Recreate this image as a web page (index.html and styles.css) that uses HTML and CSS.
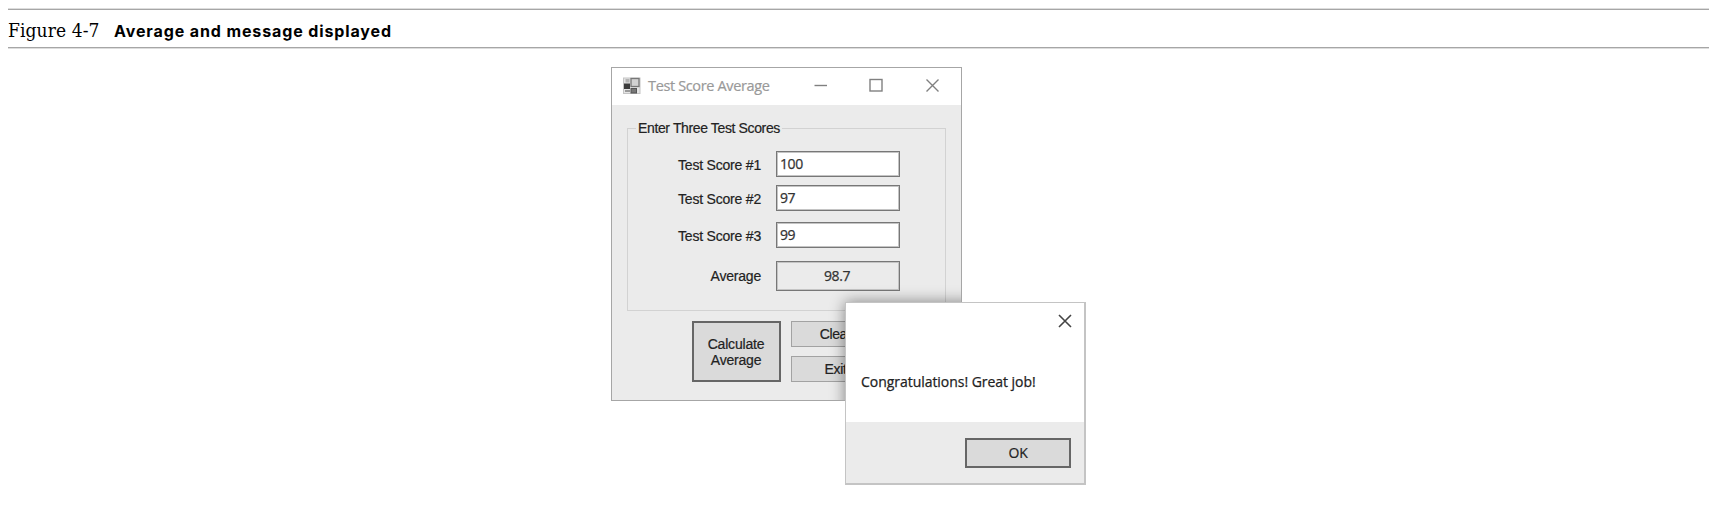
FILE: index.html
```
<!DOCTYPE html>
<html lang="en">
<head>
<meta charset="utf-8">
<title>Figure 4-7</title>
<link rel="stylesheet" href="styles.css">
</head>
<body>
<figure class="figure">
  <figcaption class="caption"><span class="caption-number">Figure 4-7</span><span class="caption-title">Average and message displayed</span></figcaption>
  <div class="stage">
    <section class="window">
      <header class="titlebar">
        <svg class="app-icon" width="18" height="18" viewBox="0 0 18 18">
          <rect x=".5" y="1" width="16.5" height="15.5" fill="#e4e4e4" stroke="#c4c4c4"/>
          <rect x="1" y="6.5" width="6" height="5.5" fill="#3c3c3c"/>
          <rect x="2.5" y="2" width="4" height="3.5" fill="#b4b4b4"/>
          <rect x="8" y="1.5" width="8" height="8" fill="#d2d2d2" stroke="#777" stroke-width="1.3"/>
          <rect x="8" y="11.5" width="5.5" height="4.5" fill="#777" stroke="#555"/>
          <path d="M2 14h5" stroke="#999" stroke-width="2"/>
        </svg>
        <span class="title">Test Score Average</span>
        <svg class="controls" width="128" height="16" viewBox="0 0 128 16" fill="none" stroke="#808080" stroke-width="1.4">
          <path d="M1.5 8.5H14"/>
          <rect x="57" y="2.5" width="12" height="11.5"/>
          <path d="M113.5 2.5l12 12m0-12l-12 12"/>
        </svg>
      </header>
      <div class="client">
        <fieldset class="group">
          <legend class="legend">Enter Three Test Scores</legend>
          <div class="fields">
            <span class="label">Test Score #1</span><span class="box">100</span>
            <span class="label">Test Score #2</span><span class="box">97</span>
            <span class="label">Test Score #3</span><span class="box">99</span>
            <span class="label label-average">Average</span><span class="box box-result">98.7</span>
          </div>
        </fieldset>
        <div class="actions">
          <button class="btn btn-main">Calculate<br>Average</button>
          <div class="stack">
            <button class="btn">Clear</button>
            <button class="btn">Exit</button>
          </div>
        </div>
      </div>
    </section>
    <section class="dialog">
      <div class="dialog-body">
        <svg class="dialog-close" width="14" height="14" viewBox="0 0 14 14" stroke="#444" stroke-width="1.6"><path d="M1 1l12 12M13 1L1 13"/></svg>
        <span class="message">Congratulations! Great job!</span>
      </div>
      <footer class="dialog-footer"><button class="btn btn-ok">OK</button></footer>
    </section>
  </div>
</figure>
</body>
</html>
```
FILE: styles.css
```
* { box-sizing: border-box; }
body { margin: 0; background: #fff; font-family: "Liberation Sans", Arial, sans-serif; }
.figure { margin: 0; padding: 8px 14px 0 8px; }
.caption {
  display: flex;
  align-items: baseline;
  height: 41px;
  padding-top: 8px;
  border-top: 1px solid #ddd;
  border-bottom: 1px solid #ddd;
  box-shadow: inset 0 1px #a6a6a6, inset 0 -1px #a6a6a6;
  color: #000;
  line-height: 26px;
  white-space: nowrap;
}
.caption-number { width: 106px; font: 19px/26px "DejaVu Serif Condensed", "DejaVu Serif", serif; font-stretch: condensed; letter-spacing: .1px; }
.caption-title { font: 650 16px/26px Inter, sans-serif; letter-spacing: .88px; }
.stage { position: relative; width: 475px; height: 418px; margin: 18px 0 0 603px; }

.window { position: relative; width: 351px; height: 334px; border: 1px solid #a6a6a6; background: #ebebeb; overflow: hidden; }
.titlebar { display: flex; align-items: center; height: 37px; padding: 0 20px 0 11px; background: #fff; }
.app-icon { flex: none; margin-top: -2px; }
.title { flex: 1; margin: -2px 0 0 7px; color: #999; font: 14.5px "Open Sans", sans-serif; letter-spacing: -.36px; white-space: nowrap; -webkit-text-stroke: .2px; }
.controls { flex: none; margin-top: -3px; }
.client { padding: 15px 15px 0; }
.group { height: 191px; margin: 0; padding: 0; border: 1px solid #d2d2d2; }
.legend { height: 16px; margin-left: 8px; padding: 0 2px; color: #222; font-size: 14px; line-height: 16px; letter-spacing: -.37px; white-space: nowrap; -webkit-text-stroke: .2px; }
.fields {
  display: grid;
  grid-template-columns: 133px 124px;
  grid-template-rows: 34px 37px 39px 29px;
  column-gap: 15px;
  padding-top: 15px;
}
.label { padding-top: 6px; color: #222; font-size: 14px; line-height: 16px; text-align: right; letter-spacing: -.2px; white-space: nowrap; -webkit-text-stroke: .2px; }
.label-average { padding-top: 7px; }
.box { height: 26px; padding: 3px 3px; border: 1px solid #777; outline: 1px solid #c4c4c4; outline-offset: -2px; background: #fff; color: #333; font: 14px/18px "Open Sans", sans-serif; letter-spacing: -.4px; -webkit-text-stroke: .25px; }
.box-result { height: 30px; padding: 5px 4px 0 2px; background: #ebebeb; text-align: center; }
.actions { display: flex; gap: 10px; padding: 10px 0 0 65px; }
.btn { width: 89px; height: 26px; padding: 0; border: 1px solid #a2a2a2; border-radius: 0; background: #dadada; color: #222; font: 14px/16px "Liberation Sans", Arial, sans-serif; letter-spacing: -.35px; -webkit-text-stroke: .2px; }
.btn-main { width: 89px; height: 61px; padding-right: 1px; border: 2px solid #666; letter-spacing: -.2px; }
.stack { display: flex; flex-direction: column; gap: 9px; }

.dialog {
  position: absolute;
  left: 234px;
  top: 235px;
  display: flex;
  flex-direction: column;
  width: 241px;
  height: 183px;
  border: 2px solid #c4c4c4;
  border-width: 1px 2px 2px 1px;
  background: #fff;
}
/* Shadow falls only on the window behind the dialog. */
.window::after { content: ""; position: absolute; left: 233px; top: 234px; width: 241px; height: 183px; box-shadow: 0 0 14px rgba(0, 0, 0, .45); }
.dialog-body { display: flex; flex-direction: column; flex: 1; padding: 11px 12px 0 15px; }
.dialog-close { align-self: flex-end; }
.message { margin-top: 44px; color: #222; font: 14px/20px "Open Sans", sans-serif; letter-spacing: -.04px; white-space: nowrap; -webkit-text-stroke: .25px; }
.dialog-footer { display: flex; justify-content: flex-end; height: 61px; padding: 16px 13px 0 0; background: #ebebeb; }
.btn-ok { width: 106px; height: 30px; border: 2px solid #666; font-family: "Open Sans", sans-serif; }
```
